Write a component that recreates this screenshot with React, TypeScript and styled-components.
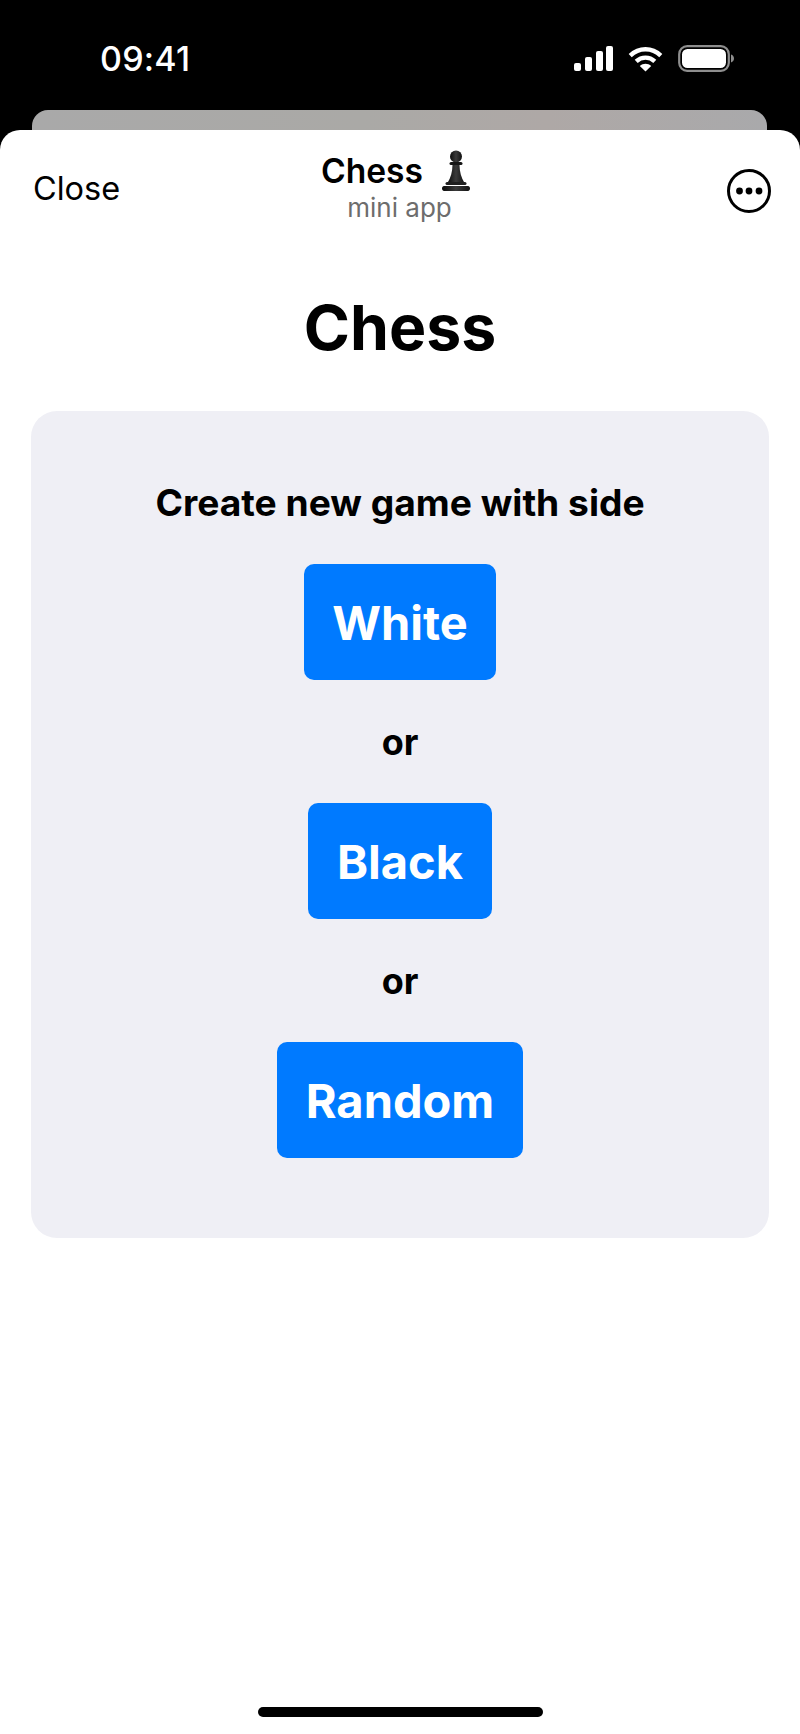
import React from "react";
import styled, { createGlobalStyle } from "styled-components";

const Global = createGlobalStyle`
  html, body { margin: 0; padding: 0; background: #000; }
  body { font-family: Inter, "Liberation Sans", sans-serif; color: #000; }
  * { box-sizing: border-box; }
`;

const Phone = styled.div`
  width: 800px;
  height: 1734px;
  background: #000;
  display: flex;
  flex-direction: column;
  overflow: hidden;
`;

const StatusBar = styled.div`
  height: 110px;
  padding: 0 66px 0 100px;
  display: flex;
  align-items: flex-start;
  justify-content: space-between;
  color: #fff;
`;

const Clock = styled.div`
  margin-top: 40px;
  font-size: 34px;
  line-height: 38px;
  font-weight: 500;
  letter-spacing: 0.2px;
`;

const StatusIcons = styled.div`
  margin-top: 45px;
  display: flex;
  align-items: center;
  gap: 15px;
`;

const Peek = styled.div`
  height: 20px;
  margin: 0 33px 0 32px;
  border-radius: 16px 16px 0 0;
  background: linear-gradient(90deg, #a9a9a9 0%, #aaa9a6 45%, #aea8a6 70%, #a9a9ab 100%);
`;

const Sheet = styled.main`
  flex: 1;
  background: #fff;
  border-radius: 20px 20px 0 0;
  display: flex;
  flex-direction: column;
  align-items: center;
`;

const NavBar = styled.header`
  width: 100%;
  height: 108px;
  padding: 14px 29px 0 30px;
  display: grid;
  grid-template-columns: 1fr auto 1fr;
  align-items: center;
`;

const CloseLabel = styled.div`
  font-size: 32.5px;
  line-height: 40px;
  font-weight: 400;
  margin: -4px 0 0 3px;
`;

const NavCenter = styled.div`
  display: flex;
  flex-direction: column;
  align-items: center;
  margin-top: -9px;
`;

const NavTitle = styled.div`
  display: flex;
  align-items: center;
  gap: 19px;
  padding-right: 10px;
  font-size: 33.6px;
  line-height: 40px;
  font-weight: 600;
`;

const NavSub = styled.div`
  font-size: 26px;
  line-height: 30px;
  color: #6d6d6d;
  margin-top: 1px;
  padding-right: 2px;
`;

const MoreWrap = styled.div`
  justify-self: end;
  display: flex;
  margin-top: -1px;
`;

const Heading = styled.h1`
  margin: 53px 0 0;
  font-size: 62.5px;
  line-height: 72px;
  font-weight: 700;
`;

const Card = styled.section`
  width: 738px;
  margin-top: 48px;
  height: 827px;
  padding-top: 70px;
  border-radius: 26px;
  background: #efeff5;
  display: flex;
  flex-direction: column;
  align-items: center;
`;

const CardTitle = styled.div`
  font-size: 37.2px;
  line-height: 44px;
  font-weight: 700;
  margin-bottom: 39px;
`;

const SideButton = styled.button`
  height: 116px;
  padding: 0 28.5px;
  border: 0;
  border-radius: 10px;
  background: #007aff;
  color: #fff;
  font-family: inherit;
  font-size: 47px;
  font-weight: 700;
`;

const Or = styled.div`
  font-size: 36px;
  line-height: 44px;
  font-weight: 700;
  margin: 39.5px 0 39.5px;
`;

const HomeBar = styled.div`
  width: 285px;
  height: 10px;
  border-radius: 5px;
  background: #000;
  margin: auto 0 17px;
`;

const Signal = () => (
  <svg width="39" height="26" viewBox="0 0 39 26" fill="#fff">
    <rect x="0" y="17" width="7" height="8" rx="2" />
    <rect x="11" y="11" width="7" height="14" rx="2" />
    <rect x="22" y="5" width="7" height="20" rx="2" />
    <rect x="32" y="0" width="7" height="25" rx="2" />
  </svg>
);

const Wifi = () => (
  <svg width="35" height="26" viewBox="0 0 35 26" fill="none" stroke="#fff" strokeWidth="4.4">
    <path d="M2.2 9.6C11 1.2 24 1.2 32.8 9.6" />
    <path d="M8.2 15.4C13.6 10.4 21.4 10.4 26.8 15.4" />
    <path d="M17.5 25.5L11.8 20C15 17 20 17 23.2 20Z" fill="#fff" stroke="none" />
  </svg>
);

const Battery = () => (
  <svg width="56" height="27" viewBox="0 0 56 27">
    <rect x="1.2" y="1.2" width="49.6" height="24.6" rx="8" fill="none" stroke="#8e8e8e" strokeWidth="2.2" />
    <rect x="4" y="4" width="44" height="19" rx="5.5" fill="#fff" />
    <path d="M53 9.5c1.8.6 3 2.2 3 4s-1.2 3.4-3 4z" fill="#8e8e8e" />
  </svg>
);

const Pawn = () => (
  <svg width="28" height="42" viewBox="0 0 28 42">
    <defs>
      <linearGradient id="pawnFill" x1="0" x2="1" y1="0" y2="0">
        <stop offset="0" stopColor="#0c0c0c" />
        <stop offset="0.5" stopColor="#3a3a3a" />
        <stop offset="1" stopColor="#101010" />
      </linearGradient>
    </defs>
    <circle cx="14" cy="6.5" r="6" fill="url(#pawnFill)" />
    <rect x="7.5" y="12" width="13" height="3" rx="1.5" fill="#161616" />
    <path d="M10.5 15h7c.2 7 1.6 12.500 5 18H5.500c3.400-5.500 4.800-11 5-18z" fill="url(#pawnFill)" />
    <rect x="3.500" y="32" width="21" height="3" rx="1.500" fill="#1f1f1f" />
    <path d="M2 36h24c1.200 0 2 1 2 2.500S27 41 26 41H2c-1 0-2-1-2-2.500S.8 36 2 36z" fill="url(#pawnFill)" />
  </svg>
);

const More = () => (
  <svg width="44" height="44" viewBox="0 0 44 44">
    <circle cx="22" cy="22" r="20.500" fill="none" stroke="#000" strokeWidth="3" />
    <circle cx="12.500" cy="22" r="3.400" />
    <circle cx="22" cy="22" r="3.400" />
    <circle cx="32" cy="22" r="3.400" />
  </svg>
);

export default function App() {
  return (
    <>
      <Global />
      <Phone>
        <StatusBar>
          <Clock>09:41</Clock>
          <StatusIcons>
            <Signal />
            <Wifi />
            <Battery />
          </StatusIcons>
        </StatusBar>
        <Peek />
        <Sheet>
          <NavBar>
            <CloseLabel>Close</CloseLabel>
            <NavCenter>
              <NavTitle>
                Chess
                <Pawn />
              </NavTitle>
              <NavSub>mini app</NavSub>
            </NavCenter>
            <MoreWrap>
              <More />
            </MoreWrap>
          </NavBar>
          <Heading>Chess</Heading>
          <Card>
            <CardTitle>Create new game with side</CardTitle>
            <SideButton>White</SideButton>
            <Or>or</Or>
            <SideButton>Black</SideButton>
            <Or>or</Or>
            <SideButton>Random</SideButton>
          </Card>
          <HomeBar />
        </Sheet>
      </Phone>
    </>
  );
}
